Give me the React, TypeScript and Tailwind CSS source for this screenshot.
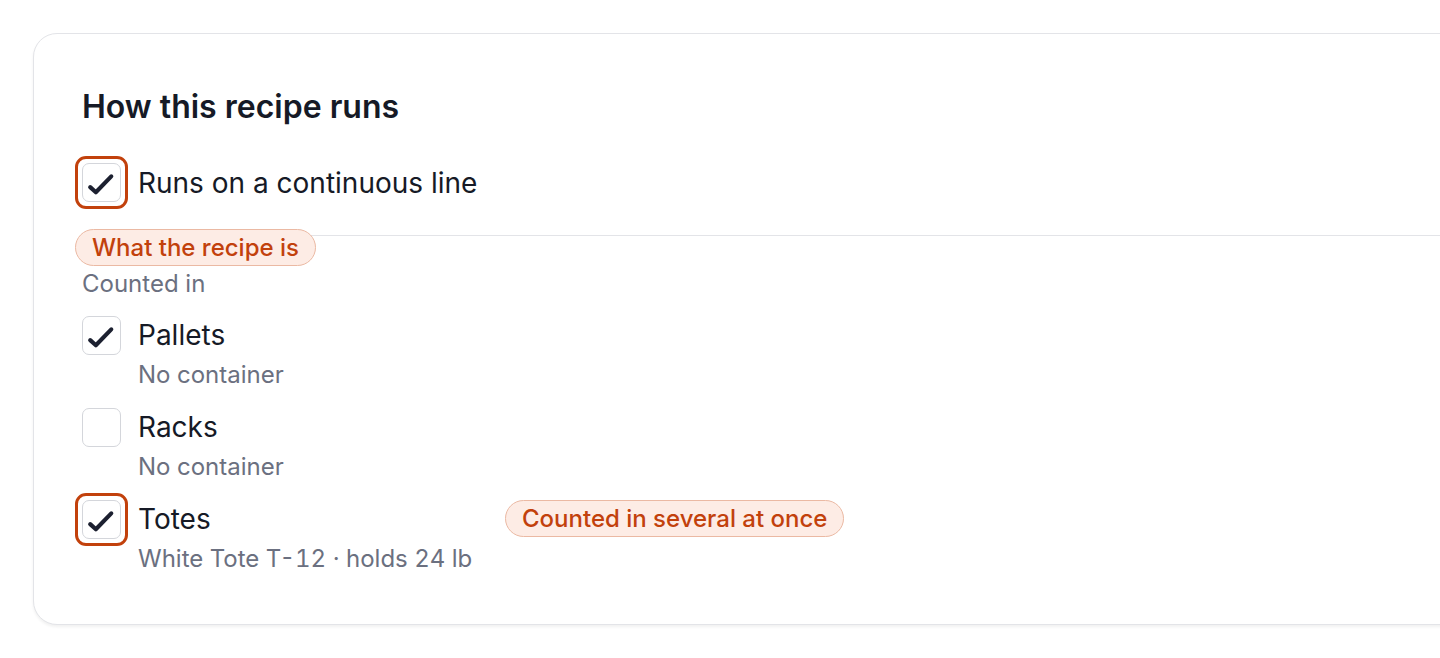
import React from "react";

type Item = {
  label: string;
  detail: string;
  checked: boolean;
  flagged?: boolean;
  note?: string;
};

const ITEMS: Item[] = [
  { label: "Pallets", detail: "No container", checked: true },
  { label: "Racks", detail: "No container", checked: false },
  {
    label: "Totes",
    detail: "White Tote T-12 · holds 24 lb",
    checked: true,
    flagged: true,
    note: "Counted in several at once",
  },
];

function Box({ checked, flagged }: { checked: boolean; flagged?: boolean }) {
  return (
    <span className="relative flex h-[39px] w-[39px] shrink-0 rounded-[7px] border-[1.5px] border-[#d4d6db] bg-white">
      {checked && (
        <svg viewBox="0 0 36 36" className="h-full w-full" fill="none">
          <path
            d="M7 22.5l5.5 5L27.5 12"
            stroke="#1c2030"
            strokeWidth="4"
            strokeLinecap="round"
            strokeLinejoin="round"
          />
        </svg>
      )}
      {flagged && (
        <span className="pointer-events-none absolute -inset-[8px] rounded-[11px] border-[3px] border-[#c2410c]" />
      )}
    </span>
  );
}

function Pill({ children }: { children: React.ReactNode }) {
  return (
    <span className="inline-flex h-[37px] items-center rounded-full border-[1.5px] border-[#ebb9a3] bg-[#fdece5] px-[16px] text-[24px] font-medium text-[#c2410c]">
      {children}
    </span>
  );
}

export default function App() {
  return (
    <div
      className="h-[658px] w-[1440px] overflow-hidden bg-white"
      style={{ fontFamily: "Inter, 'Noto Sans', sans-serif" }}
    >
      <div className="ml-[33px] mt-[33px] w-[1500px] rounded-3xl border border-[#e3e4e8] bg-white pb-[51px] pl-[48px] pt-[55px] shadow-[0_2px_3px_rgba(0,0,0,0.06)]">
        <h2 className="text-[32px] font-semibold leading-[36px] text-[#161a26]">
          How this recipe runs
        </h2>

        <div className="mt-[38px] flex h-[39px] items-center gap-[17px]">
          <Box checked flagged />
          <span className="text-[28px] text-[#161a26]">Runs on a continuous line</span>
        </div>

        <div className="relative mt-[33px] border-t border-[#e3e4e8] pt-[34px]">
          <span className="absolute -left-[7px] -top-[7px]">
            <Pill>What the recipe is</Pill>
          </span>

          <p className="text-[24px] leading-[28px] text-[#6b7080]">Counted in</p>

          <div className="mt-[18px] flex flex-col gap-[19px]">
            {ITEMS.map((item) => (
              <div key={item.label} className="relative flex gap-[17px]">
                <Box checked={item.checked} flagged={item.flagged} />
                <div className="flex flex-col">
                  <span className="text-[28px] leading-[39px] text-[#161a26]">{item.label}</span>
                  <span className="mt-[6px] text-[24px] leading-[28px] text-[#6b7080] tabular-nums">
                    {item.detail}
                  </span>
                </div>
                {item.note && (
                  <span className="absolute left-[423px] top-0">
                    <Pill>{item.note}</Pill>
                  </span>
                )}
              </div>
            ))}
          </div>
        </div>
      </div>
    </div>
  );
}
